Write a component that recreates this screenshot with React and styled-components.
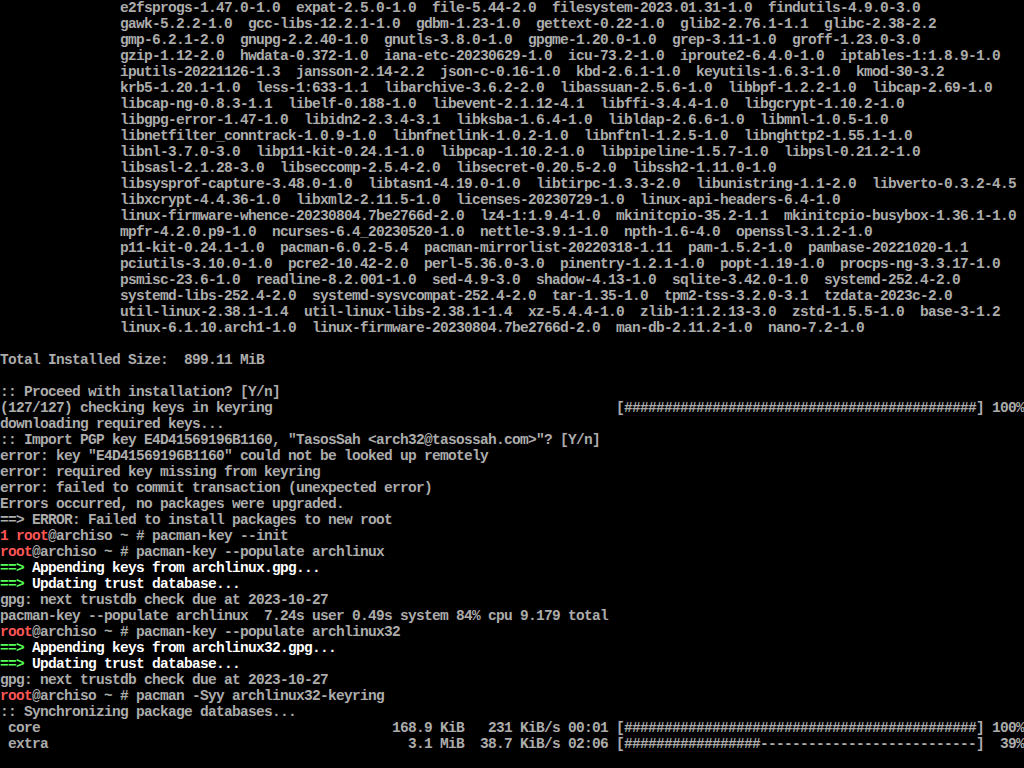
import React from "react";
import styled, { createGlobalStyle } from "styled-components";

const Global = createGlobalStyle`
  html, body { margin: 0; padding: 0; background: #000; }
  #root { width: 1024px; height: 768px; }
`;

const Screen = styled.div`
  width: 1024px;
  height: 768px;
  overflow: hidden;
  background: #000;
  color: #aaaaaa;
  font-family: "Liberation Mono", "DejaVu Sans Mono", monospace;
  font-size: 14.5px;
  font-weight: 700;
  letter-spacing: -0.7014px;
  display: flex;
  flex-direction: column;
`;

const Line = styled.div`
  height: 16px;
  line-height: 16px;
  white-space: pre;
  flex: none;
`;

const TONES = {
  n: "#acacac",
  red: "#ff5555",
  green: "#55ff55",
  white: "#ffffff",
};

const Seg = styled.span`
  color: ${(p) => TONES[p.$tone] || TONES.n};
`;

const pad = (s, n) => s + " ".repeat(Math.max(0, n - s.length));
const IND = " ".repeat(15);

const pkgs = [
  "e2fsprogs-1.47.0-1.0  expat-2.5.0-1.0  file-5.44-2.0  filesystem-2023.01.31-1.0  findutils-4.9.0-3.0",
  "gawk-5.2.2-1.0  gcc-libs-12.2.1-1.0  gdbm-1.23-1.0  gettext-0.22-1.0  glib2-2.76.1-1.1  glibc-2.38-2.2",
  "gmp-6.2.1-2.0  gnupg-2.2.40-1.0  gnutls-3.8.0-1.0  gpgme-1.20.0-1.0  grep-3.11-1.0  groff-1.23.0-3.0",
  "gzip-1.12-2.0  hwdata-0.372-1.0  iana-etc-20230629-1.0  icu-73.2-1.0  iproute2-6.4.0-1.0  iptables-1:1.8.9-1.0",
  "iputils-20221126-1.3  jansson-2.14-2.2  json-c-0.16-1.0  kbd-2.6.1-1.0  keyutils-1.6.3-1.0  kmod-30-3.2",
  "krb5-1.20.1-1.0  less-1:633-1.1  libarchive-3.6.2-2.0  libassuan-2.5.6-1.0  libbpf-1.2.2-1.0  libcap-2.69-1.0",
  "libcap-ng-0.8.3-1.1  libelf-0.188-1.0  libevent-2.1.12-4.1  libffi-3.4.4-1.0  libgcrypt-1.10.2-1.0",
  "libgpg-error-1.47-1.0  libidn2-2.3.4-3.1  libksba-1.6.4-1.0  libldap-2.6.6-1.0  libmnl-1.0.5-1.0",
  "libnetfilter_conntrack-1.0.9-1.0  libnfnetlink-1.0.2-1.0  libnftnl-1.2.5-1.0  libnghttp2-1.55.1-1.0",
  "libnl-3.7.0-3.0  libp11-kit-0.24.1-1.0  libpcap-1.10.2-1.0  libpipeline-1.5.7-1.0  libpsl-0.21.2-1.0",
  "libsasl-2.1.28-3.0  libseccomp-2.5.4-2.0  libsecret-0.20.5-2.0  libssh2-1.11.0-1.0",
  "libsysprof-capture-3.48.0-1.0  libtasn1-4.19.0-1.0  libtirpc-1.3.3-2.0  libunistring-1.1-2.0  libverto-0.3.2-4.5",
  "libxcrypt-4.4.36-1.0  libxml2-2.11.5-1.0  licenses-20230729-1.0  linux-api-headers-6.4-1.0",
  "linux-firmware-whence-20230804.7be2766d-2.0  lz4-1:1.9.4-1.0  mkinitcpio-35.2-1.1  mkinitcpio-busybox-1.36.1-1.0",
  "mpfr-4.2.0.p9-1.0  ncurses-6.4_20230520-1.0  nettle-3.9.1-1.0  npth-1.6-4.0  openssl-3.1.2-1.0",
  "p11-kit-0.24.1-1.0  pacman-6.0.2-5.4  pacman-mirrorlist-20220318-1.11  pam-1.5.2-1.0  pambase-20221020-1.1",
  "pciutils-3.10.0-1.0  pcre2-10.42-2.0  perl-5.36.0-3.0  pinentry-1.2.1-1.0  popt-1.19-1.0  procps-ng-3.3.17-1.0",
  "psmisc-23.6-1.0  readline-8.2.001-1.0  sed-4.9-3.0  shadow-4.13-1.0  sqlite-3.42.0-1.0  systemd-252.4-2.0",
  "systemd-libs-252.4-2.0  systemd-sysvcompat-252.4-2.0  tar-1.35-1.0  tpm2-tss-3.2.0-3.1  tzdata-2023c-2.0",
  "util-linux-2.38.1-1.4  util-linux-libs-2.38.1-1.4  xz-5.4.4-1.0  zlib-1:1.2.13-3.0  zstd-1.5.5-1.0  base-3-1.2",
  "linux-6.1.10.arch1-1.0  linux-firmware-20230804.7be2766d-2.0  man-db-2.11.2-1.0  nano-7.2-1.0",
];

const plain = (t) => [[t, "n"]];
const prompt = (cmd, prefix) => [
  [(prefix || "") + "root", "red"],
  ["@archiso ~ # " + cmd, "n"],
];
const step = (t) => [
  ["==> ", "green"],
  [t, "white"],
];
const bar = (hashes, dashes) => "[" + "#".repeat(hashes) + "-".repeat(dashes) + "]";

const lines = [
  ...pkgs.map((p) => plain(IND + p)),
  plain(""),
  plain("Total Installed Size:  899.11 MiB"),
  plain(""),
  plain(":: Proceed with installation? [Y/n] "),
  plain(pad("(127/127) checking keys in keyring", 77) + bar(44, 0) + " 100%"),
  plain("downloading required keys..."),
  plain(':: Import PGP key E4D41569196B1160, "TasosSah <arch32@tasossah.com>"? [Y/n]'),
  plain('error: key "E4D41569196B1160" could not be looked up remotely'),
  plain("error: required key missing from keyring"),
  plain("error: failed to commit transaction (unexpected error)"),
  plain("Errors occurred, no packages were upgraded."),
  plain("==> ERROR: Failed to install packages to new root"),
  prompt("pacman-key --init", "1 "),
  prompt("pacman-key --populate archlinux"),
  step("Appending keys from archlinux.gpg..."),
  step("Updating trust database..."),
  plain("gpg: next trustdb check due at 2023-10-27"),
  plain("pacman-key --populate archlinux  7.24s user 0.49s system 84% cpu 9.179 total"),
  prompt("pacman-key --populate archlinux32"),
  step("Appending keys from archlinux32.gpg..."),
  step("Updating trust database..."),
  plain("gpg: next trustdb check due at 2023-10-27"),
  prompt("pacman -Syy archlinux32-keyring"),
  plain(":: Synchronizing package databases..."),
  plain(pad(" core", 49) + "168.9 KiB   231 KiB/s 00:01 " + bar(44, 0) + " 100%"),
  plain(pad(" extra", 51) + "3.1 MiB  38.7 KiB/s 02:06 " + bar(17, 27) + "  39%"),
];

export default function App() {
  return (
    <>
      <Global />
      <Screen>
        {lines.map((segs, i) => (
          <Line key={i}>
            {segs.map(([t, tone], j) => (
              <Seg key={j} $tone={tone}>
                {t}
              </Seg>
            ))}
          </Line>
        ))}
      </Screen>
    </>
  );
}
